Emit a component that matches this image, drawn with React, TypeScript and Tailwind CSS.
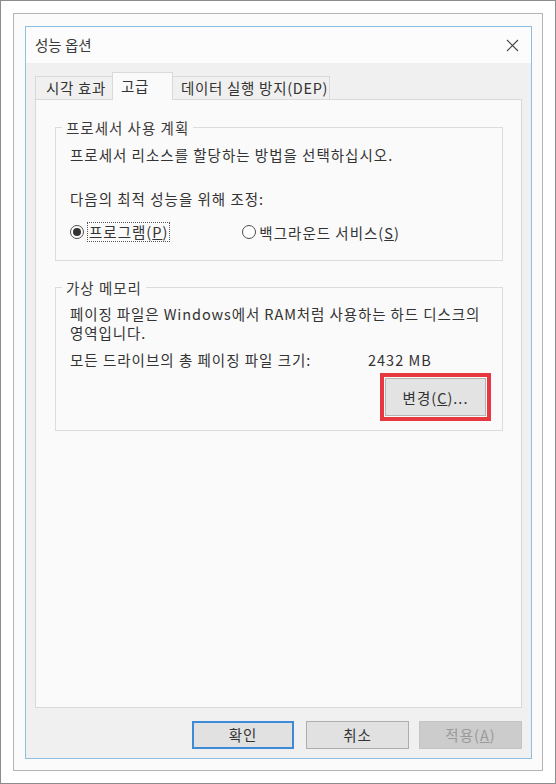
import React from "react";

const FONT = { fontFamily: '"Noto Sans CJK KR", "Noto Sans", "Liberation Sans", sans-serif' };

function Radio({ checked }: { checked?: boolean }) {
  return (
    <span className="w-[14px] h-[14px] rounded-full border border-[#4d4d4d] bg-white flex items-center justify-center shrink-0">
      {checked && <span className="w-[8px] h-[8px] rounded-full bg-[#333]" />}
    </span>
  );
}

function GroupBox({ label, children, className }: { label: string; children: React.ReactNode; className?: string }) {
  return (
    <fieldset className={"border border-[#dcdcdc] ml-[19px] mr-[18px] px-[14px] " + (className || "")}>
      <legend className="ml-[-8px] px-[4px] leading-[19px] text-[#3a3a3a]">{label}</legend>
      {children}
    </fieldset>
  );
}

export default function App() {
  return (
    <div className="w-[556px] h-[784px] bg-white border border-[#8c8c8c] p-[12px] flex" style={FONT}>
      <div className="flex-1 flex border border-[#b4b4b4] bg-[#fbfbfb] pl-[11px] pt-[12px] pr-[10px] pb-[11px]">
        <div className="flex-1 flex flex-col border border-[#8fbfe0] bg-[#f0f0f0] text-[#333]">
          {/* title bar */}
          <div className="h-[36px] bg-[#fcfcfc] flex items-center justify-between pl-[9px] pr-[12px]">
            <span className="text-[14.5px] text-[#3a3a3a]">성능 옵션</span>
            <svg width="13" height="13" viewBox="0 0 13 13" className="mt-[1px]">
              <path d="M1 1 L12 12 M12 1 L1 12" stroke="#444" strokeWidth="1.1" fill="none" />
            </svg>
          </div>

          <div className="flex-1 flex flex-col px-[9px] pt-[9px] pb-[9px]">
            {/* tabs */}
            <div className="h-[27px] flex items-end text-[14.5px] leading-[19px] tracking-[0.7px] relative z-10">
              <div className="w-[77px] h-[23px] border border-r-0 border-b-0 border-[#d9d9d9] bg-[#f0f0f0] pl-[10px] pt-[1px]">
                시각 효과
              </div>
              <div className="w-[61px] h-[28px] mb-[-1px] border border-b-0 border-[#d9d9d9] bg-[#fafafa] pl-[8px] pt-[3px]">
                고급
              </div>
              <div className="w-[157px] h-[23px] border border-l-0 border-b-0 border-[#d9d9d9] bg-[#f0f0f0] pl-[8px] pt-[1px] whitespace-nowrap">
                데이터 실행 방지(DEP)
              </div>
            </div>

            {/* panel */}
            <div className="flex-1 border border-[#d9d9d9] bg-[#fafafa] pt-[18px] text-[14.5px] leading-[19px] tracking-[1px]">
              <GroupBox label="프로세서 사용 계획" className="pt-[8px] pb-[18px]">
                <p>프로세서 리소스를 할당하는 방법을 선택하십시오.</p>
                <p className="mt-[25px]">다음의 최적 성능을 위해 조정:</p>
                <div className="mt-[14px] flex items-center">
                  <div className="flex items-center gap-[3px]">
                    <Radio checked />
                    <span className="border border-dotted border-[#555] px-[1px] leading-[18px]">
                      프로그램(<span className="underline">P</span>)
                    </span>
                  </div>
                  <div className="flex items-center gap-[3px] ml-[72px]">
                    <Radio />
                    <span>
                      백그라운드 서비스(<span className="underline">S</span>)
                    </span>
                  </div>
                </div>
              </GroupBox>

              <GroupBox label="가상 메모리" className="mt-[17px] pt-[7px] pb-[14px]">
                <p className="whitespace-nowrap tracking-[0.9px]">
                  페이징 파일은 Windows에서 RAM처럼 사용하는 하드 디스크의
                  <br />
                  영역입니다.
                </p>
                <div className="mt-[8px] flex">
                  <span className="w-[298px]">모든 드라이브의 총 페이징 파일 크기:</span>
                  <span>2432 MB</span>
                </div>
                <div className="mt-[9px] flex justify-end pr-[2px]">
                  <div className="relative">
                    <button className="w-[101px] h-[38px] border border-[#b4b4b4] bg-[#e3e3e3] text-[#333] text-[14.5px] tracking-[1px]">
                      변경(<span className="underline">C</span>)...
                    </button>
                    <div className="absolute -inset-[5px] border-[4px] border-[#e8383f] pointer-events-none" />
                  </div>
                </div>
              </GroupBox>
            </div>

            {/* buttons */}
            <div className="mt-[13px] flex justify-end gap-[12px] text-[14.5px] tracking-[1px]">
              <button className="w-[102px] h-[28px] border-2 border-[#3d8ad6] bg-[#e1e1e1] text-[#333]">확인</button>
              <button className="w-[103px] h-[28px] border border-[#adadad] bg-[#e1e1e1] text-[#333]">취소</button>
              <button className="w-[103px] h-[28px] border border-[#c4c4c4] bg-[#cccccc] text-[#9a9a9a] -ml-[2px]">
                적용(<span className="underline">A</span>)
              </button>
            </div>
          </div>
        </div>
      </div>
    </div>
  );
}
